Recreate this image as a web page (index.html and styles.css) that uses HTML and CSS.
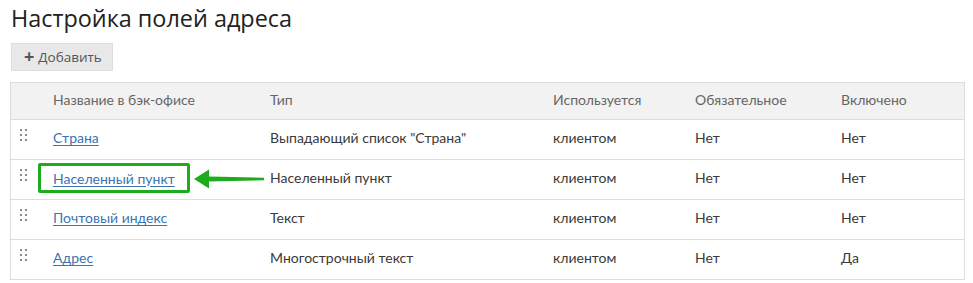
FILE: index.html
```html
<!DOCTYPE html>
<html lang="ru">
<head>
<meta charset="utf-8">
<link rel="stylesheet" href="styles.css">
</head>
<body>
<div class="page">
  <h1 class="title">Настройка полей адреса</h1>
  <button class="btn-add"><span class="plus">+</span>Добавить</button>
  <table class="fields">
    <thead>
      <tr>
        <th class="c-drag"></th>
        <th class="c-name">Название в бэк-офисе</th>
        <th class="c-type">Тип</th>
        <th class="c-used">Используется</th>
        <th class="c-req">Обязательное</th>
        <th class="c-on">Включено</th>
      </tr>
    </thead>
    <tbody>
      <tr>
        <td class="c-drag"><svg class="handle" width="8" height="13" viewBox="0 0 8 13"><g fill="#8a8a8a"><rect x="0" y="0" width="2" height="2"/><rect x="5" y="0" width="2" height="2"/><rect x="0" y="5" width="2" height="2"/><rect x="5" y="5" width="2" height="2"/><rect x="0" y="10" width="2" height="2"/><rect x="5" y="10" width="2" height="2"/></g></svg></td>
        <td class="c-name"><a href="#">Страна</a></td>
        <td>Выпадающий список "Страна"</td>
        <td>клиентом</td>
        <td>Нет</td>
        <td>Нет</td>
      </tr>
      <tr>
        <td class="c-drag"><svg class="handle" width="8" height="13" viewBox="0 0 8 13"><g fill="#8a8a8a"><rect x="0" y="0" width="2" height="2"/><rect x="5" y="0" width="2" height="2"/><rect x="0" y="5" width="2" height="2"/><rect x="5" y="5" width="2" height="2"/><rect x="0" y="10" width="2" height="2"/><rect x="5" y="10" width="2" height="2"/></g></svg></td>
        <td class="c-name"><span class="mark"><a href="#">Населенный пункт</a></span><svg class="arrow" width="72" height="22" viewBox="0 0 72 22"><path d="M0 11 L15 1.5 L15 8.5 L70 9.8 L70 12.2 L15 13.5 L15 20.5 Z" fill="#1eac1e"/></svg></td>
        <td>Населенный пункт</td>
        <td>клиентом</td>
        <td>Нет</td>
        <td>Нет</td>
      </tr>
      <tr>
        <td class="c-drag"><svg class="handle" width="8" height="13" viewBox="0 0 8 13"><g fill="#8a8a8a"><rect x="0" y="0" width="2" height="2"/><rect x="5" y="0" width="2" height="2"/><rect x="0" y="5" width="2" height="2"/><rect x="5" y="5" width="2" height="2"/><rect x="0" y="10" width="2" height="2"/><rect x="5" y="10" width="2" height="2"/></g></svg></td>
        <td class="c-name"><a href="#">Почтовый индекс</a></td>
        <td>Текст</td>
        <td>клиентом</td>
        <td>Нет</td>
        <td>Нет</td>
      </tr>
      <tr>
        <td class="c-drag"><svg class="handle" width="8" height="13" viewBox="0 0 8 13"><g fill="#8a8a8a"><rect x="0" y="0" width="2" height="2"/><rect x="5" y="0" width="2" height="2"/><rect x="0" y="5" width="2" height="2"/><rect x="5" y="5" width="2" height="2"/><rect x="0" y="10" width="2" height="2"/><rect x="5" y="10" width="2" height="2"/></g></svg></td>
        <td class="c-name"><a href="#">Адрес</a></td>
        <td>Многострочный текст</td>
        <td>клиентом</td>
        <td>Нет</td>
        <td>Да</td>
      </tr>
    </tbody>
  </table>
</div>
</body>
</html>
```
FILE: styles.css
```css
html, body {
  margin: 0;
  padding: 0;
  background: #fff;
}
body {
  font-family: Lato, "Open Sans", "Liberation Sans", sans-serif;
  color: #333;
}
.page {
  padding: 0 9px 0 10px;
}
.title {
  font-family: "Open Sans", "Liberation Sans", sans-serif;
  font-weight: 400;
  font-size: 23.4px;
  line-height: 32px;
  color: #222;
  margin: 2px 0 9px 1px;
}
.btn-add {
  display: inline-flex;
  align-items: center;
  gap: 4px;
  height: 28px;
  width: 102px;
  margin-left: 1px;
  padding: 0 0 0 12px;
  background: #e8e8e8;
  border: 1px solid #dedede;
  border-radius: 0;
  font-family: "Open Sans", "Liberation Sans", sans-serif;
  font-size: 13.5px;
  color: #555;
}
.plus {
  font-weight: 700;
  font-size: 18px;
  line-height: 1;
  color: #555;
  margin-top: -2px;
}
.fields {
  margin-top: 11px;
  width: 955px;
  border-collapse: collapse;
  border: 1px solid #ddd;
  font-size: 14px;
}
.fields th {
  background: #f2f2f2;
  color: #666;
  font-weight: 400;
  text-align: left;
  height: 32px;
  padding: 0 0 4px 0;
  border-bottom: 1px solid #ddd;
}
.fields td {
  height: 35px;
  padding: 0 0 4px 0;
  border-bottom: 1px solid #ddd;
  vertical-align: middle;
  color: #3a3a3a;
}
.fields .c-drag { width: 42px; }
.fields .c-name { width: 217px; }
.fields .c-type { width: 283px; }
.fields .c-used { width: 142px; }
.fields .c-req { width: 146px; }
.fields td.c-name {
  position: relative;
}
.fields a {
  color: #3d73b3;
  text-decoration: underline;
  text-underline-offset: 2px;
}
.handle {
  display: block;
  margin: -5px 0 0 9px;
}
.mark {
  position: absolute;
  left: -15px;
  top: 3px;
  height: 24px;
  padding: 0 12px 0 12px;
  display: flex;
  align-items: center;
  border: 3px solid #1eac1e;
  border-radius: 2px;
}
.arrow {
  position: absolute;
  left: 141px;
  top: 8px;
}
```
